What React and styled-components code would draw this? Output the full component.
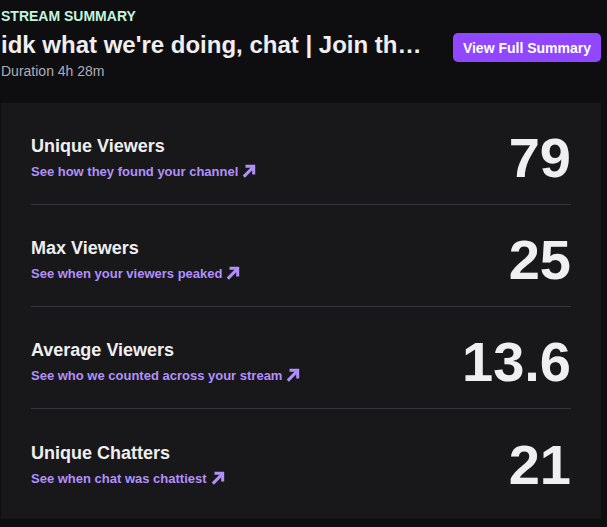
import React from 'react';
import styled, {createGlobalStyle} from 'styled-components';

const GlobalStyle = createGlobalStyle`
    body{
        margin:0;
        background:#0e0e10;
        font-family:"Liberation Sans", Arial, sans-serif;
    }
`;

const stats = [
    {title:'Unique Viewers', link:'See how they found your channel', value:'79'},
    {title:'Max Viewers', link:'See when your viewers peaked', value:'25'},
    {title:'Average Viewers', link:'See who we counted across your stream', value:'13.6'},
    {title:'Unique Chatters', link:'See when chat was chattiest', value:'21'},
];

const ArrowIcon = () => (
    <svg width='14' height='14' viewBox='0 0 14 14' fill='none'>
        <path d='M1.8 12.6L11 3.4' stroke='currentColor' strokeWidth='3'/>
        <path d='M3.5 2.3H11.7V10.5' stroke='currentColor' strokeWidth='3'/>
    </svg>
);

const App = () => {
    return(
        <React.Fragment>
            <GlobalStyle/>
            <Page>
                <Header>
                    <HeaderText>
                        <Eyebrow>STREAM SUMMARY</Eyebrow>
                        <Title>idk what we're doing, chat | Join the stream and hang out with us</Title>
                        <Duration>Duration 4h 28m</Duration>
                    </HeaderText>
                    <Button>View Full Summary</Button>
                </Header>
                <Panel>
                    {stats.map((s, i) => (
                        <Row key={s.title} last={i === stats.length - 1}>
                            <Info>
                                <StatTitle>{s.title}</StatTitle>
                                <StatLink>{s.link}<ArrowIcon/></StatLink>
                            </Info>
                            <Value>{s.value}</Value>
                        </Row>
                    ))}
                </Panel>
            </Page>
        </React.Fragment>
    )
}

const Page = styled.div`
    width:600px;
    padding-left:1px;
`;

const Header = styled.header`
    display:flex;
    justify-content:space-between;
    align-items:flex-start;
    gap:22px;
    padding:7px 0px 23px 0px;
`;

const HeaderText = styled.div`
    flex:1;
    min-width:0;
    display:flex;
    flex-direction:column;
`;

const Eyebrow = styled.div`
    color:#c2f5df;
    font-size:14px;
    font-weight:700;
    line-height:18px;
    margin-bottom:6px;
`;

const Title = styled.h1`
    margin:0;
    color:#efeff1;
    font-size:24px;
    font-weight:700;
    line-height:28px;
    white-space:nowrap;
    overflow:hidden;
    text-overflow:ellipsis;
`;

const Duration = styled.div`
    color:#adadb8;
    font-size:14px;
    line-height:18px;
    margin-top:3px;
`;

const Button = styled.button`
    margin-top:26px;
    height:29px;
    padding:0px 10px;
    border:none;
    border-radius:5px;
    background:#9147ff;
    color:#fff;
    font-family:inherit;
    font-size:14px;
    font-weight:700;
    white-space:nowrap;
    cursor:pointer;
`;

const Panel = styled.section`
    background:#18181b;
    padding:0px 30px 8px 30px;
`;

const Row = styled.div`
    display:flex;
    justify-content:space-between;
    align-items:center;
    padding:${props => props.last ? '32px 0px 23px 0px' : '31px 0px 23px 0px'};
    border-bottom:${props => props.last ? 'none' : '1px solid #35353b'};
`;

const Info = styled.div`
    display:flex;
    flex-direction:column;
    gap:6px;
`;

const StatTitle = styled.div`
    color:#efeff1;
    font-size:18px;
    font-weight:700;
    line-height:22px;
`;

const StatLink = styled.a`
    display:flex;
    align-items:center;
    gap:4px;
    color:#b290fb;
    font-size:13px;
    font-weight:700;
    line-height:18px;
    cursor:pointer;
    svg{
        margin-top:-2px;
    }
`;

const Value = styled.div`
    color:#efeff1;
    font-size:56px;
    font-weight:700;
    line-height:46px;
    margin-top:1px;
`;

export default App;
